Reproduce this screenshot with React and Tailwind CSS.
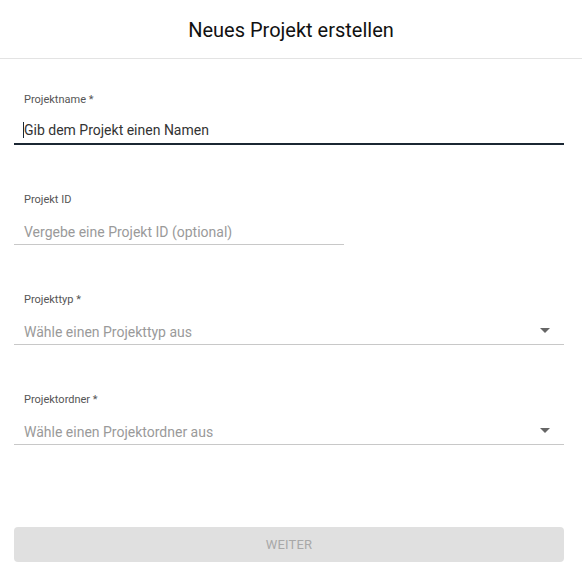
import React from 'react';

const Field = ({ label, placeholder, active, select, short, first }) => {
  return (
    <div className={first ? 'pt-[34px]' : 'pt-[48px]'}>
      <div className="pl-[10px] h-[14px] leading-[14px] text-[11px] text-[#555]">{label}</div>
      <div
        className={`h-[38px] flex items-end justify-between pl-[10px] pr-[14px] ${short ? 'w-[330px]' : 'w-full'} ${
          active ? 'border-b-2 border-[#1b2733] pb-[5px]' : 'border-b border-[#c8c8c8] pb-[4px]'
        }`}
      >
        <span className={`relative text-[14px] leading-[16px] ${active ? 'text-[#333]' : 'text-[#9a9a9a]'}`}>
          {active && <span className="absolute left-[-1px] top-0 h-[16px] w-px bg-[#1b2733]" />}
          {placeholder}
        </span>
        {select && (
          <svg width="10" height="5" viewBox="0 0 10 5" className="mb-[7px]">
            <path d="M0 0 L10 0 L5 5 Z" fill="#666" />
          </svg>
        )}
      </div>
    </div>
  );
};

export default function App() {
  return (
    <div className="w-[582px] h-[588px] bg-white flex flex-col" style={{ fontFamily: 'Roboto, "Liberation Sans", sans-serif' }}>
      <div className="h-[59px] border-b border-[#e3e3e3] flex items-center justify-center">
        <h1 className="text-[20px] leading-[24px] text-[#111] pt-[1px]">Neues Projekt erstellen</h1>
      </div>
      <div className="px-[14px] pr-[18px]">
        <Field label="Projektname *" placeholder="Gib dem Projekt einen Namen" active first />
        <Field label="Projekt ID" placeholder="Vergebe eine Projekt ID (optional)" short />
        <Field label="Projekttyp *" placeholder="Wähle einen Projekttyp aus" select />
        <Field label="Projektordner *" placeholder="Wähle einen Projektordner aus" select />
      </div>
      <div className="px-[14px] pr-[18px] pt-[82px]">
        <button className="w-full h-[35px] rounded-[4px] bg-[#e0e0e0] text-[#a8a8a8] text-[13px] tracking-[0.2px]">
          WEITER
        </button>
      </div>
    </div>
  );
}
